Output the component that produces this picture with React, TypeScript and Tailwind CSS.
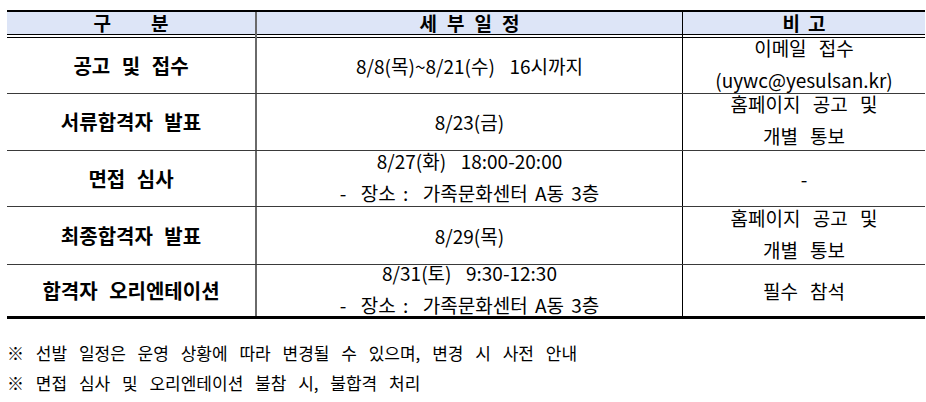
import React from "react";

const FONT = "font-['Noto_Sans_CJK_KR',sans-serif]";

type Row = {
  title: string;
  detail: string[];
  note: string[];
  h: string;
};

const rows: Row[] = [
  {
    title: "공고 및 접수",
    detail: ["8/8(목)~8/21(수)  16시까지"],
    note: ["이메일 접수", "(uywc@yesulsan.kr)"],
    h: "h-[56px]",
  },
  {
    title: "서류합격자 발표",
    detail: ["8/23(금)"],
    note: ["홈페이지 공고 및", "개별 통보"],
    h: "h-[57px]",
  },
  {
    title: "면접 심사",
    detail: ["8/27(화)  18:00-20:00", "-  장소 :  가족문화센터 A동 3층"],
    note: ["-"],
    h: "h-[56px]",
  },
  {
    title: "최종합격자 발표",
    detail: ["8/29(목)"],
    note: ["홈페이지 공고 및", "개별 통보"],
    h: "h-[58px]",
  },
  {
    title: "합격자 오리엔테이션",
    detail: ["8/31(토)  9:30-12:30", "-  장소 :  가족문화센터 A동 3층"],
    note: ["필수 참석"],
    h: "h-[54px]",
  },
];

function Lines({ lines, spacing }: { lines: string[]; spacing: string }) {
  return (
    <div
      className={`flex flex-col items-center justify-center h-full leading-[32px] text-[19px] ${
        lines.length > 1 ? "pb-[4px]" : ""
      } ${spacing}`}
    >
      {lines.map((l, i) => (
        <div key={i} className="whitespace-pre">
          {l}
        </div>
      ))}
    </div>
  );
}

function DoubleRule() {
  return (
    <>
      <div className="h-px bg-black" />
      <div className="h-[2px]" />
      <div className="h-px bg-black" />
    </>
  );
}

export default function App() {
  return (
    <div className={`w-[926px] h-[402px] bg-white text-black ${FONT}`}>
      <div className="pt-[10px] pl-[7px] w-[925px]">
        <div className="border-t-[2px] border-black">
          {/* header */}
          <div className="grid grid-cols-[250px_426px_1fr] grid-rows-1 h-[22px] bg-[#dde5f7] text-[19px] font-bold leading-[22px]">
            <div className="border-r-2 border-[#6a6a6a] flex justify-center gap-[40px]">
              <span>구</span>
              <span>분</span>
            </div>
            <div className="border-r border-black flex justify-center gap-[10px]">
              <span>세</span>
              <span>부</span>
              <span>일</span>
              <span>정</span>
            </div>
            <div className="flex justify-center gap-[8px]">
              <span>비</span>
              <span>고</span>
            </div>
          </div>
          <div className="grid grid-cols-[250px_426px_1fr]">
            <div className="border-r-2 border-[#6a6a6a]">
              <DoubleRule />
            </div>
            <div className="border-r border-black">
              <DoubleRule />
            </div>
            <div>
              <DoubleRule />
            </div>
          </div>

          {rows.map((r, i) => (
            <div
              key={i}
              className={`grid grid-cols-[250px_426px_1fr] grid-rows-1 ${r.h} ${
                i === rows.length - 1 ? "border-b-[3px] border-black" : "border-b border-[#3a3a3a]"
              }`}
            >
              <div className="min-h-0 border-r-2 border-[#6a6a6a] flex items-center justify-center text-[20px] font-bold [word-spacing:7px]">
                <span className="whitespace-pre">{r.title}</span>
              </div>
              <div className="min-h-0 border-r border-black">
                <Lines lines={r.detail} spacing="[word-spacing:3px]" />
              </div>
              <div className="min-h-0">
                <Lines lines={r.note} spacing="[word-spacing:8px]" />
              </div>
            </div>
          ))}
        </div>
      </div>

      <div className="pl-[7px] pt-[19px] text-[17px] leading-[30px] whitespace-pre [word-spacing:8px]">
        <div>※ 선발 일정은 운영 상황에 따라 변경될 수 있으며, 변경 시 사전 안내</div>
        <div>※ 면접 심사 및 오리엔테이션 불참 시, 불합격 처리</div>
      </div>
    </div>
  );
}
